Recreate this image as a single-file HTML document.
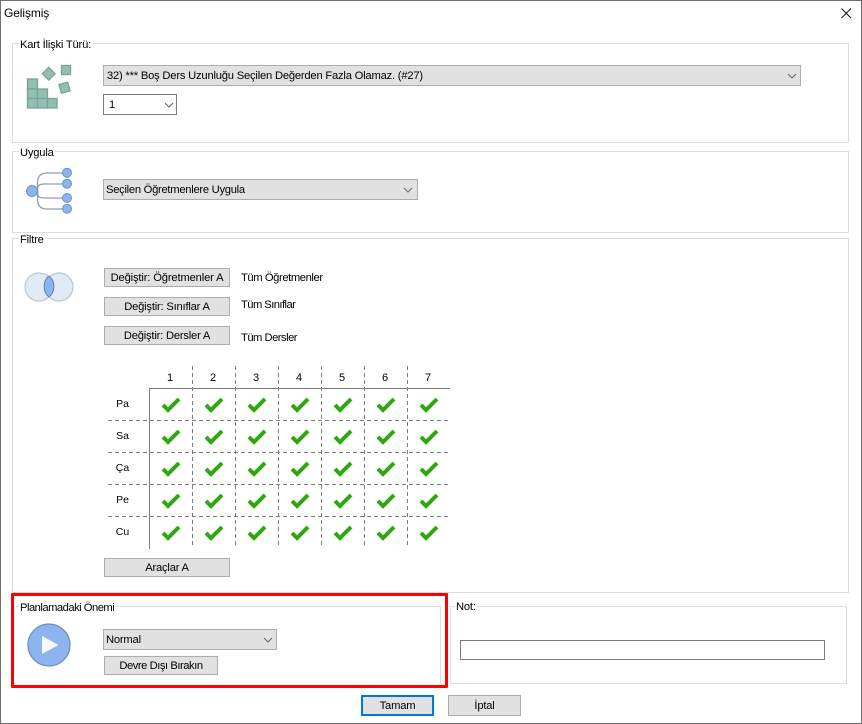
<!DOCTYPE html>
<html lang="tr"><head><meta charset="utf-8"><title>Gelişmiş</title>
<style>
html,body{margin:0;padding:0;background:#fff}
#w{position:relative;width:862px;height:724px;overflow:hidden;background:#fff;font:11.2px "Liberation Sans",sans-serif;letter-spacing:-.2px;color:#000}
#w div{position:absolute;box-sizing:border-box}
.g{border:1px solid #dcdcdc}
.l{background:#fff;padding:0 1px;line-height:14px;height:14px;white-space:nowrap}
.b{background:#e1e1e1;border:1px solid #adadad;text-align:center;line-height:19px;white-space:nowrap}
.c{background:#e1e1e1;border:1px solid #adadad;line-height:21px;padding-left:2px;white-space:nowrap}
.t{white-space:nowrap;line-height:14px}
svg{position:absolute;left:0;top:0}
</style></head><body>
<div id="w">
<div style="left:0;top:0;width:862px;height:724px;border:1px solid #6f6f6f"></div>
<div class="t" style="left:4px;top:6px;font-size:12px;letter-spacing:-.1px">Gelişmiş</div>

<div class="g" style="left:12px;top:43px;width:837px;height:100px"></div>
<div class="l" style="left:19px;top:38px">Kart İlişki Türü:</div>
<div class="c" style="left:103px;top:65px;width:698px;height:21px;padding-left:3px">32) *** Boş Ders Uzunluğu Seçilen Değerden Fazla Olamaz. (#27)</div>
<div class="c" style="left:103px;top:94px;width:74px;height:21px;background:#fff;border-color:#7a7a7a;padding-left:5px">1</div>

<div class="g" style="left:12px;top:151px;width:837px;height:82px"></div>
<div class="l" style="left:19px;top:146px">Uygula</div>
<div class="c" style="left:103px;top:179px;width:315px;height:21px;letter-spacing:-.27px">Seçilen Öğretmenlere Uygula</div>

<div class="g" style="left:12px;top:238px;width:837px;height:355px"></div>
<div class="l" style="left:19px;top:233px">Filtre</div>
<div class="b" style="left:104px;top:268px;width:126px;height:19px;letter-spacing:-.15px">Değiştir: Öğretmenler A</div>
<div class="b" style="left:104px;top:297px;width:126px;height:19px">Değiştir: Sınıflar A</div>
<div class="b" style="left:104px;top:326px;width:126px;height:19px">Değiştir: Dersler A</div>
<div class="t" style="left:241px;top:271px;letter-spacing:-.4px">Tüm Öğretmenler</div>
<div class="t" style="left:241px;top:298px;letter-spacing:-.55px">Tüm Sınıflar</div>
<div class="t" style="left:241px;top:331px;letter-spacing:-.5px">Tüm Dersler</div>
<div class="b" style="left:104px;top:558px;width:126px;height:19px">Araçlar A</div>

<div style="left:16px;top:606px;width:425px;height:1px;background:#dcdcdc"></div>
<div style="left:440px;top:606px;width:1px;height:77px;background:#dcdcdc"></div>
<div class="l" style="left:19px;top:601px;letter-spacing:-.5px">Planlamadaki Önemi</div>
<div class="c" style="left:103px;top:629px;width:174px;height:21px">Normal</div>
<div class="b" style="left:104px;top:656px;width:114px;height:19px;letter-spacing:-.45px">Devre Dışı Bırakın</div>

<div class="g" style="left:450px;top:606px;width:397px;height:78px"></div>
<div class="l" style="left:455px;top:600px">Not:</div>
<div style="left:460px;top:640px;width:365px;height:20px;border:1px solid #7a7a7a;background:#fff"></div>

<div class="b" style="left:361px;top:695px;width:73px;height:21px;border:2px solid #0078d7;line-height:19px">Tamam</div>
<div class="b" style="left:448px;top:695px;width:73px;height:21px;line-height:20px">İptal</div>

<div style="left:11px;top:593px;width:437px;height:95px;border:3px solid #f00;border-radius:1px"></div>

<svg width="862" height="724" viewBox="0 0 862 724" fill="none">
<defs>
<path id="k" d="M-7.5 1L-2.5 6L8.500 -5" stroke="#2fa80f" stroke-width="4"/>
<path id="v" d="M0 0L4 4L8 0" stroke="#666" stroke-width="1"/>
</defs>
<!-- close -->
<path d="M841.500 8.500L851 18M851 8.500L841.500 18" stroke="#111" stroke-width="1"/>
<!-- combo arrows -->
<use href="#v" x="788" y="74"/>
<use href="#v" x="165" y="103"/>
<use href="#v" x="404" y="188"/>
<use href="#v" x="264" y="638"/>

<!-- blocks icon -->
<g fill="#93bfb3" stroke="#76a597" stroke-width="1.300">
<rect x="27.500" y="79" width="10" height="10"/>
<rect x="27.500" y="89" width="10" height="9.500"/>
<rect x="37.500" y="89" width="10" height="9.500"/>
<rect x="27.500" y="98.500" width="10" height="9.500"/>
<rect x="37.500" y="98.500" width="10" height="9.500"/>
<rect x="47.500" y="98.500" width="9.500" height="9.500"/>
<rect x="61.500" y="65.500" width="9" height="9"/>
<rect x="-4.500" y="-4.500" width="9" height="9" transform="translate(48.700,73.700) rotate(45)"/>
<rect x="-4.500" y="-4.500" width="9" height="9" transform="translate(64.500,87.700) rotate(-15)"/>
</g>

<!-- tree icon -->
<g stroke="#8d9fb2" stroke-width="1.300">
<path d="M32 191H37.500V183Q37.500 173 47 173H67"/>
<path d="M37.500 191V189Q37.500 184 44 184H67"/>
<path d="M37.500 191V193Q37.500 198 44 198H67"/>
<path d="M37.500 191V199Q37.500 209 47 209H67"/>
</g>
<g fill="#8db4ee" stroke="#6d94c8" stroke-width="1">
<circle cx="32" cy="191" r="5.500"/>
<circle cx="67" cy="172.700" r="4.500"/>
<circle cx="67" cy="183.700" r="4.500"/>
<circle cx="67" cy="198" r="4.500"/>
<circle cx="67" cy="208.700" r="4.500"/>
</g>

<!-- venn icon -->
<circle cx="39" cy="287" r="14" fill="#e2ebf3" stroke="#b3c7dc" stroke-width="1.200"/>
<circle cx="59" cy="287" r="14" fill="#e2ebf3" stroke="#b3c7dc" stroke-width="1.200"/>
<path d="M49 276C55.500 281 55.500 292 49 297C42.500 292 42.500 281 49 276Z" fill="#8db4ee" stroke="#5f80ae" stroke-width="1"/>

<!-- play icon -->
<circle cx="49" cy="645" r="21" fill="#8db4ee" stroke="#6d8fc0" stroke-width="1.300"/>
<path d="M42 636L58.500 645L42 654Z" fill="#f8fafe"/>

<!-- grid -->
<g stroke="#7d7d7d" stroke-width="1">
<path d="M149.500 388V549M149 388.500H450"/>
<g stroke-dasharray="4 3">
<path d="M108 420.500H450M108 452.500H450M108 484.500H450M108 516.500H450"/>
<path d="M192.500 366V547M235.500 366V547M278.500 366V547M321.500 366V547M364.500 366V547M407.500 366V547"/>
</g>
</g>
<g font-family="'Liberation Sans',sans-serif" font-size="11" fill="#000" text-anchor="middle" letter-spacing="0">
<text x="170" y="381">1</text><text x="213" y="381">2</text><text x="256" y="381">3</text><text x="299" y="381">4</text><text x="342" y="381">5</text><text x="385" y="381">6</text><text x="428" y="381">7</text>
<text x="122.500" y="407" font-size="10.500">Pa</text><text x="122.500" y="439" font-size="10.500">Sa</text><text x="122.500" y="471" font-size="10.500">Ça</text><text x="122.500" y="503" font-size="10.500">Pe</text><text x="122.500" y="535" font-size="10.500">Cu</text>
</g>
<g>
<use href="#k" x="170.500" y="404"/><use href="#k" x="213.500" y="404"/><use href="#k" x="256.500" y="404"/><use href="#k" x="299.500" y="404"/><use href="#k" x="342.500" y="404"/><use href="#k" x="385.500" y="404"/><use href="#k" x="428.500" y="404"/>
<use href="#k" x="170.500" y="436"/><use href="#k" x="213.500" y="436"/><use href="#k" x="256.500" y="436"/><use href="#k" x="299.500" y="436"/><use href="#k" x="342.500" y="436"/><use href="#k" x="385.500" y="436"/><use href="#k" x="428.500" y="436"/>
<use href="#k" x="170.500" y="468"/><use href="#k" x="213.500" y="468"/><use href="#k" x="256.500" y="468"/><use href="#k" x="299.500" y="468"/><use href="#k" x="342.500" y="468"/><use href="#k" x="385.500" y="468"/><use href="#k" x="428.500" y="468"/>
<use href="#k" x="170.500" y="500"/><use href="#k" x="213.500" y="500"/><use href="#k" x="256.500" y="500"/><use href="#k" x="299.500" y="500"/><use href="#k" x="342.500" y="500"/><use href="#k" x="385.500" y="500"/><use href="#k" x="428.500" y="500"/>
<use href="#k" x="170.500" y="532"/><use href="#k" x="213.500" y="532"/><use href="#k" x="256.500" y="532"/><use href="#k" x="299.500" y="532"/><use href="#k" x="342.500" y="532"/><use href="#k" x="385.500" y="532"/><use href="#k" x="428.500" y="532"/>
</g>
</svg>
</div>
</body></html>
